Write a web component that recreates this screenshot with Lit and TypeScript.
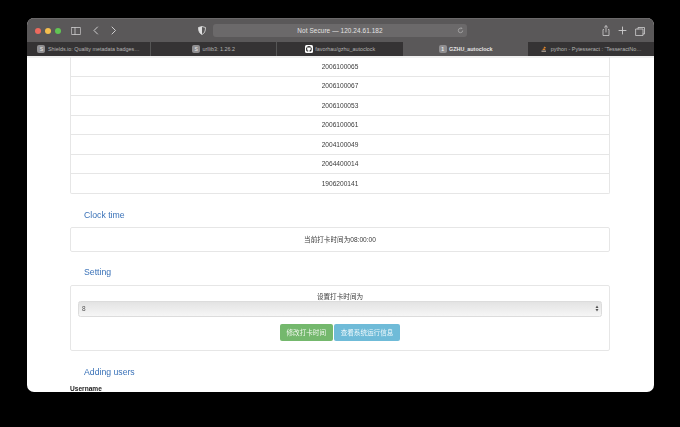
import { LitElement, html, css, svg } from "lit";
import { customElement } from "lit/decorators.js";

const ROWS = ["2006100065","2006100067","2006100053","2006100061","2004100049","2064400014","1906200141"];
const TABS = [
  { label: "Shields.io: Quality metadata badges…", icon: "S" },
  { label: "urllib3: 1.26.2", icon: "S" },
  { label: "favorhau/gzhu_autoclock", icon: "gh" },
  { label: "GZHU_autoclock", icon: "1", active: true },
  { label: "python - Pytesseract : “TesseractNo…", icon: "so" },
];

@customElement("app-root")
export class AppRoot extends LitElement {
  static styles = css`
    :host { display: block; width: 680px; height: 427px; background: #000; box-sizing: border-box; padding: 18px 26px 35px 27px; font-family: "Liberation Sans", "Noto Sans CJK SC", sans-serif; overflow: hidden; }
    .win { height: 374px; border-radius: 7px; overflow: hidden; display: flex; flex-direction: column; background: #fff; filter: blur(.4px); }
    .bar { height: 24px; flex: none; background: #5a5859; display: grid; grid-template-columns: 186px 254px 1fr; align-items: center; border-top: 1px solid #6b696a; box-sizing: border-box; }
    .left { display: flex; align-items: center; padding-left: 8px; }
    .dot { width: 6px; height: 6px; border-radius: 50%; margin-right: 4px; }
    .left svg { display: block; }
    .side { margin-left: 6px; }
    .back { margin-left: 12px; }
    .fwd { margin-left: 12px; }
    .shield { margin-left: auto; margin-right: 7px; }
    .url { height: 13px; background: #6b696a; border-radius: 3px; display: flex; align-items: center; justify-content: center; position: relative; color: #e4e3e3; font-size: 6.4px; letter-spacing: .1px; }
    .reload { position: absolute; right: 3px; top: 3px; }
    .right { display: flex; align-items: center; justify-content: flex-end; gap: 8px; padding-right: 9px; }
    .tabs { height: 14px; flex: none; display: grid; grid-template-columns: 124px 126px 126px 125px 126px; background: #353334; color: #b4b3b3; font-size: 5.4px; }
    .tab { display: flex; align-items: center; justify-content: center; gap: 2.5px; border-right: 1px solid #555; white-space: nowrap; overflow: hidden; }
    .tab:nth-child(3) { border-right: none; }
    .tab:last-child { border-right: none; }
    .tab.active { background: #5a5859; color: #e6e5e5; font-weight: 700; border-right: none; }
    .fav { width: 8px; height: 8px; border-radius: 2px; background: #8f8e90; color: #ececec; font-size: 5px; line-height: 8px; text-align: center; flex: none; }
    .page { flex: 1; min-height: 0; overflow: hidden; padding: 1px 44px 0 43px; font-size: 6.6px; color: #3a3a3a; box-shadow: inset 0 2px 0 #f1f1f1; }
    .table { border: 1px solid #e6e6e6; border-top: none; border-radius: 0 0 2px 2px; }
    .row { height: 19.5px; box-sizing: border-box; display: flex; align-items: center; justify-content: center; border-bottom: 1px solid #e6e6e6; }
    .row:last-child { border-bottom: none; height: 19px; }
    h4 { margin: 0; font-size: 8.7px; font-weight: 400; color: #3a72b8; padding-left: 14px; line-height: 11px; }
    .h1 { margin-top: 15.5px; margin-bottom: 6px; }
    .h2 { margin-top: 15.5px; margin-bottom: 6.5px; }
    .h3 { margin-top: 16px; margin-bottom: 6px; }
    .panel { border: 1px solid #e6e6e6; border-radius: 2px; box-sizing: border-box; }
    .clock { height: 25px; display: flex; align-items: center; justify-content: center; }
    .setting { height: 66px; padding: 6px 7px 0; display: flex; flex-direction: column; align-items: stretch; text-align: center; }
    .label { line-height: 9px; }
    .select { height: 16.5px; border: 1px solid #dcdcdc; border-radius: 2.5px; background: linear-gradient(#e3e3e3, #f6f6f6); display: flex; align-items: center; justify-content: space-between; padding: 0 2px 0 3px; font-size: 6.5px; color: #555; box-sizing: border-box; }
    .btns { display: flex; justify-content: center; gap: 1.5px; margin-top: 7px; }
    .btn { height: 16.5px; border-radius: 2px; color: #f1f8ee; font-size: 6.6px; display: flex; align-items: center; justify-content: center; box-sizing: border-box; }
    .green { width: 52.5px; background: #74b86d; }
    .blue { width: 66px; background: #6fbbd8; color: #eef8fb; }
    .user { font-weight: 700; color: #222; line-height: 9px; margin-top: 1.5px; }
  `;

  icon(k: string) {
    if (k === "gh") return html`<svg width="8" height="8" viewBox="0 0 16 16"><rect width="16" height="16" rx="3" fill="#fff"/><path fill="#222" d="M8 2a6 6 0 0 0-1.900 11.700c.3 0 .4-.1.4-.3v-1c-1.700.4-2-.8-2-.8-.3-.7-.7-.9-.7-.9-.5-.4 0-.4 0-.4.6 0 .9.6.9.6.5.9 1.400.7 1.800.5 0-.4.2-.7.4-.8-1.300-.2-2.700-.7-2.700-3 0-.6.2-1.200.6-1.600-.1-.2-.3-.8 0-1.600 0 0 .5-.2 1.600.6a5.600 5.600 0 0 1 3 0c1.100-.8 1.600-.6 1.600-.6.3.8.1 1.400 0 1.600.4.4.6 1 .6 1.600 0 2.300-1.400 2.800-2.700 3 .2.2.4.5.4 1.100v1.600c0 .2.1.3.4.3A6 6 0 0 0 8 2z"/></svg>`;
    if (k === "so") return html`<svg width="8" height="8" viewBox="0 0 16 16"><path d="M3 11h9v3H3z" fill="#9a8f86"/><path d="M5 10l1-3 5 1-1 2zM7 6l2-3 3 2-2 2z" fill="#d9822b"/></svg>`;
    return html`<span class="fav">${k}</span>`;
  }

  chrome(d: string, w: number, h: number, cls = "", sw = 1) {
    return html`<svg class=${cls} width=${w} height=${h} viewBox="0 0 ${w} ${h}" fill="none" stroke="#cfcecf" stroke-width=${sw} stroke-linecap="round" stroke-linejoin="round">${svg`<path d=${d}/>`}</svg>`;
  }

  render() {
    return html`<div class="win">
      <div class="bar">
        <div class="left">
          <span class="dot" style="background:#ed6a5e"></span>
          <span class="dot" style="background:#f4bf4f"></span>
          <span class="dot" style="background:#61c554"></span>
          ${this.chrome("M1 1.500h8a.7.7 0 0 1 .7.7v5.600a.7.7 0 0 1-.7.7H1a.7.7 0 0 1-.7-.7V2.200a.7.7 0 0 1 .7-.7zM4 1.500v7", 10, 10, "side", .8)}
          ${this.chrome("M4.500 1 1 4.500 4.500 8", 6, 9, "back")}
          ${this.chrome("M1 1l3.500 3.500L1 8", 6, 9, "fwd")}
          <svg class="shield" width="8" height="9" viewBox="0 0 8 9"><path d="M4 .5 7.500 1.500C7.500 5 6.500 7.500 4 8.500 1.500 7.500.5 5 .5 1.500z" fill="none" stroke="#e0e0e0" stroke-width=".8"/><path d="M4 .5 .5 1.500C.5 5 1.500 7.500 4 8.500z" fill="#e0e0e0"/></svg>
        </div>
        <div class="url">Not Secure — 120.24.61.182
          <svg class="reload" width="7" height="7" viewBox="0 0 7 7" fill="none" stroke="#b5b4b4" stroke-width=".7"><path d="M5.700 3.500A2.200 2.200 0 1 1 3.500 1.300h1.200M4 .4l.9.9-.9.9"/></svg>
        </div>
        <div class="right">
          ${this.chrome("M1.500 4.500H1v6h6v-6h-.5M4 7V.7M2.400 2.200 4 .7l1.600 1.500", 8, 11, "", .8)}
          ${this.chrome("M4.500 1v7M1 4.500h7", 9, 9, "", .9)}
          ${this.chrome("M3 3V1.500h6.500V8H8M1 3h7v6.500H1z", 10, 10, "", .8)}
        </div>
      </div>
      <div class="tabs">
        ${TABS.map(t => html`<div class="tab ${t.active ? "active" : ""}">${this.icon(t.icon)}<span>${t.label}</span></div>`)}
      </div>
      <div class="page">
        <div class="table">${ROWS.map(r => html`<div class="row">${r}</div>`)}</div>
        <h4 class="h1">Clock time</h4>
        <div class="panel clock">当前打卡时间为08:00:00</div>
        <h4 class="h2">Setting</h4>
        <div class="panel setting">
          <div class="label">设置打卡时间为</div>
          <div class="select"><span>8</span>
            <svg width="4" height="7" viewBox="0 0 4 7" fill="#555"><path d="M2 .5 3.500 3h-3zM2 6.500.5 4h3z"/></svg>
          </div>
          <div class="btns"><div class="btn green">修改打卡时间</div><div class="btn blue">查看系统运行信息</div></div>
        </div>
        <h4 class="h3">Adding users</h4>
        <div class="user">Username</div>
      </div>
    </div>`;
  }
}
